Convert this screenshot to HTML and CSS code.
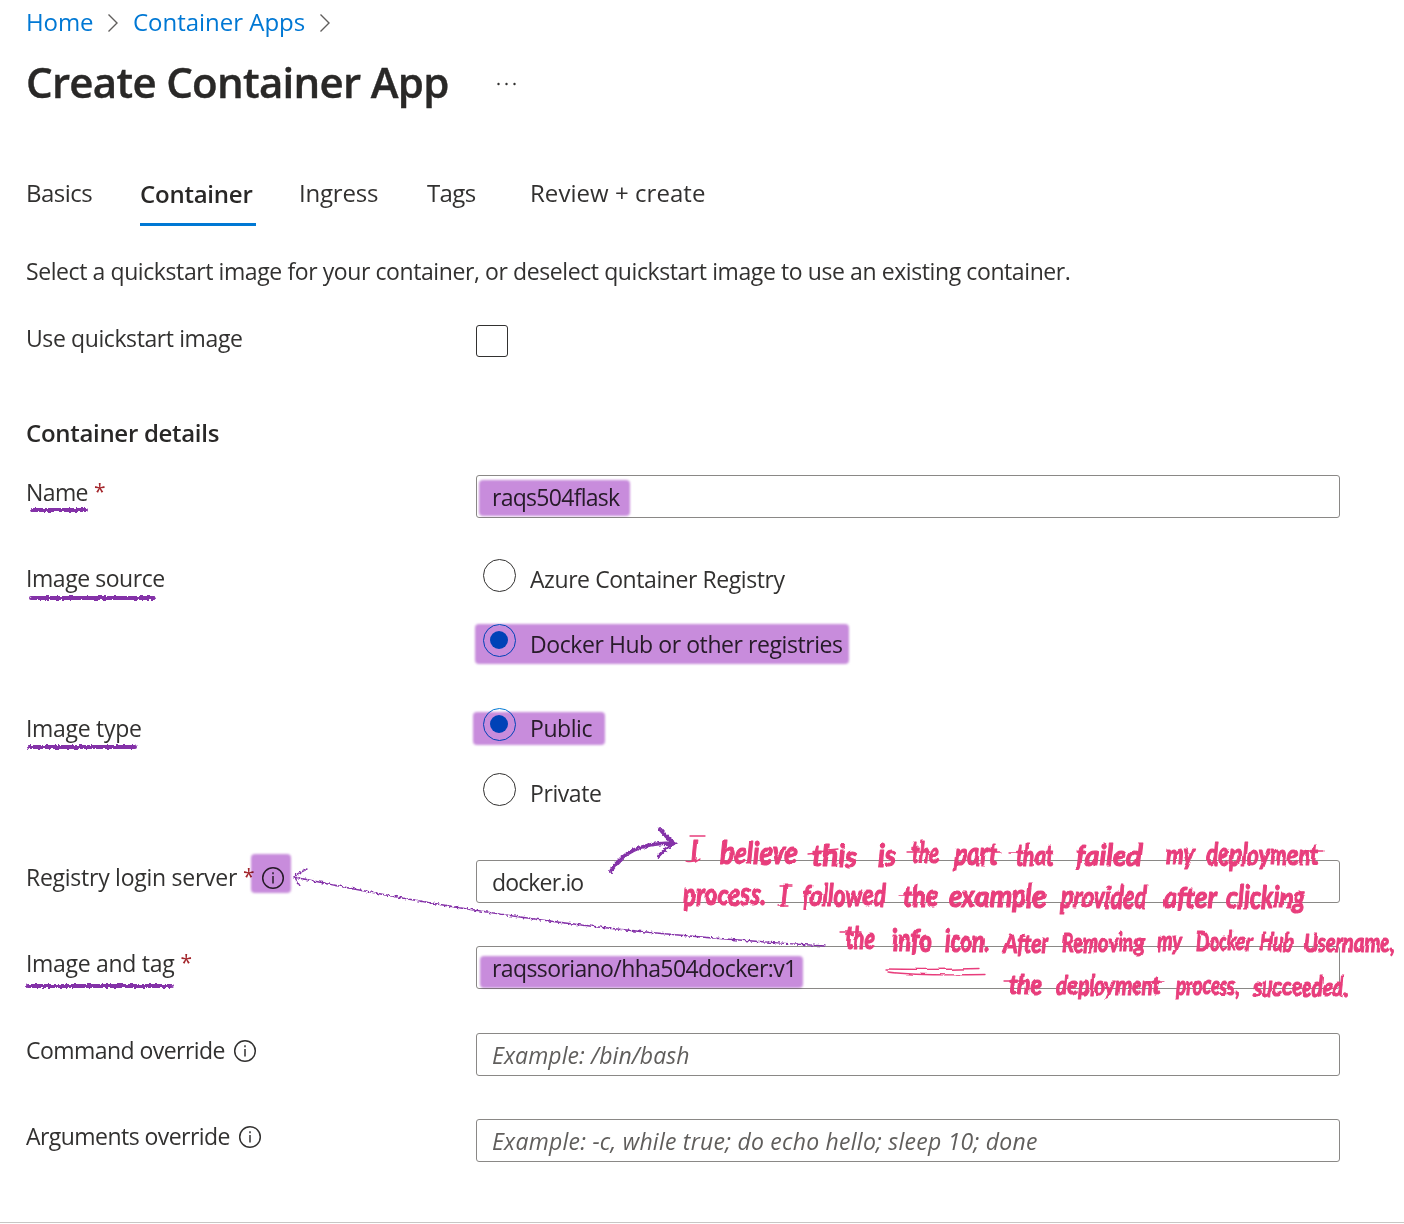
FILE: index.html
```
<!DOCTYPE html>
<html lang="en">
<head>
<meta charset="utf-8">
<title>Create Container App</title>
<link rel="stylesheet" href="styles.css">
</head>
<body>
<main class="page">
  <nav class="crumbs">
    <a class="home">Home</a>
    <svg class="chev" viewBox="0 0 12 20"><path d="M1.500 1.500 10 10l-8.500 8.500"/></svg>
    <a class="apps">Container Apps</a>
    <svg class="chev" viewBox="0 0 12 20"><path d="M1.500 1.500 10 10l-8.500 8.500"/></svg>
  </nav>
  <header class="title">
    <h1>Create Container App</h1>
    <svg class="more" viewBox="0 0 22 4"><circle cx="2.500" cy="2" r="1.200"/><circle cx="10.500" cy="2" r="1.200"/><circle cx="18.500" cy="2" r="1.200"/></svg>
  </header>
  <div class="tabs">
    <a class="tab basics">Basics</a>
    <a class="tab active">Container</a>
    <a class="tab ingress">Ingress</a>
    <a class="tab tags">Tags</a>
    <a class="tab review">Review + create</a>
  </div>
  <p class="desc">Select a quickstart image for your container, or deselect quickstart image to use an existing container.</p>
  <div class="row quick"><label>Use quickstart image</label><span class="check"></span></div>
  <h2>Container details</h2>
  <div class="row name"><label class="tight">Name<b>*</b></label><div class="field t5">raqs504flask</div></div>
  <div class="row source">
    <label>Image source</label>
    <div class="radios">
      <div class="radio"><i></i><span>Azure Container Registry</span></div>
      <div class="radio on"><i></i><span>Docker Hub or other registries</span></div>
    </div>
  </div>
  <div class="row type">
    <label>Image type</label>
    <div class="radios">
      <div class="radio on"><i></i><span>Public</span></div>
      <div class="radio"><i></i><span>Private</span></div>
    </div>
  </div>
  <div class="row server"><label class="login">Registry login server<b>*</b><svg class="info" viewBox="0 0 24 24"><circle cx="12" cy="12" r="10.300"/><path d="M12 10v7.500M12 6.300v2"/></svg></label><div class="field t7">docker.io</div></div>
  <div class="row image"><label class="imgtag">Image and tag<b>*</b></label><div class="field t5 up">raqssoriano/hha504docker:v1</div></div>
  <div class="row command"><label class="cmd">Command override<svg class="info" viewBox="0 0 24 24"><circle cx="12" cy="12" r="10.300"/><path d="M12 10v7.500M12 6.300v2"/></svg></label><div class="field hint">Example: /bin/bash</div></div>
  <div class="row args"><label class="cmd">Arguments override<svg class="info" viewBox="0 0 24 24"><circle cx="12" cy="12" r="10.300"/><path d="M12 10v7.500M12 6.300v2"/></svg></label><div class="field hint long">Example: -c, while true; do echo hello; sleep 10; done</div></div>
  <footer></footer>

  <svg class="marker" viewBox="0 0 1404 1224">
    <defs><filter id="soft" x="-5%" y="-10%" width="110%" height="120%"><feGaussianBlur stdDeviation="0.8"/></filter></defs>
    <g class="wide">
      <rect x="479" y="480" width="151" height="36" rx="4"/>
      <rect x="475" y="624" width="374" height="40" rx="4"/>
      <rect x="473" y="712" width="132" height="33" rx="4"/>
      <rect x="251" y="854" width="40" height="39" rx="4"/>
      <rect x="480" y="956" width="323" height="32" rx="4"/>
    </g>
  </svg>
  <svg class="ink" viewBox="0 0 1404 1224">
    <defs>
      <filter id="rough" filterUnits="userSpaceOnUse" x="0" y="480" width="1404" height="560"><feTurbulence type="fractalNoise" baseFrequency=".35" numOctaves="2" seed="4"/><feDisplacementMap in="SourceGraphic" scale="4" xChannelSelector="R" yChannelSelector="G"/></filter>
      <filter id="wobble" filterUnits="userSpaceOnUse" x="660" y="820" width="744" height="200"><feTurbulence type="fractalNoise" baseFrequency=".05" numOctaves="1" seed="9"/><feDisplacementMap in="SourceGraphic" scale="5" xChannelSelector="R" yChannelSelector="G"/></filter>
    </defs>
    <g class="purple">
      <path class="line" d="M32 510H86M31 598H154M29 747H135M28 986H172"/>
      <path class="swoop" d="M611 871C622 853 639 843 673 843M660 829Q667 838 674 843Q665 849 659 856"/>
      <path class="thin" d="M825 946C650 935 510 922 294 877M307 869Q299 873 294 876L300 886"/>
    </g>
    <g class="pink">
      <text x="692" y="864">I</text><text x="720" y="866" textLength="77" lengthAdjust="spacingAndGlyphs">believe</text><text x="812" y="869" textLength="45" lengthAdjust="spacingAndGlyphs">this</text><text x="878" y="869" textLength="18" lengthAdjust="spacingAndGlyphs">is</text><text x="911" y="865" textLength="29" lengthAdjust="spacingAndGlyphs">the</text><text x="954" y="867" textLength="44" lengthAdjust="spacingAndGlyphs">part</text><text x="1016" y="868" textLength="38" lengthAdjust="spacingAndGlyphs">that</text><text x="1076" y="868" textLength="66" lengthAdjust="spacingAndGlyphs">failed</text><text x="1165" y="867" textLength="30" lengthAdjust="spacingAndGlyphs">my</text><text x="1206" y="867" textLength="113" lengthAdjust="spacingAndGlyphs">deployment</text>
      <text x="683" y="907" textLength="83" lengthAdjust="spacingAndGlyphs">process.</text><text x="781" y="908">I</text><text x="803" y="908" textLength="83" lengthAdjust="spacingAndGlyphs">followed</text><text x="903" y="909" textLength="35" lengthAdjust="spacingAndGlyphs">the</text><text x="949" y="909" textLength="97" lengthAdjust="spacingAndGlyphs">example</text><text x="1061" y="910" textLength="86" lengthAdjust="spacingAndGlyphs">provided</text><text x="1163" y="910" textLength="54" lengthAdjust="spacingAndGlyphs">after</text><text x="1227" y="910" textLength="78" lengthAdjust="spacingAndGlyphs">clicking</text>
      <text x="845" y="951" textLength="30" lengthAdjust="spacingAndGlyphs">the</text><text x="892" y="953" textLength="40" lengthAdjust="spacingAndGlyphs">info</text><text x="944" y="954" textLength="46" lengthAdjust="spacingAndGlyphs">icon.</text>
      <g class="small">
        <text x="1004" y="954" textLength="45" lengthAdjust="spacingAndGlyphs">After</text><text x="1061" y="953" textLength="83" lengthAdjust="spacingAndGlyphs">Removing</text><text x="1157" y="952" textLength="25" lengthAdjust="spacingAndGlyphs">my</text><text x="1196" y="952" textLength="56" lengthAdjust="spacingAndGlyphs">Docker</text><text x="1260" y="952" textLength="34" lengthAdjust="spacingAndGlyphs">Hub</text><text x="1304" y="953" textLength="91" lengthAdjust="spacingAndGlyphs">Username,</text>
        <text x="1009" y="995" textLength="33" lengthAdjust="spacingAndGlyphs">the</text><text x="1057" y="996" textLength="103" lengthAdjust="spacingAndGlyphs">deployment</text><text x="1176" y="996" textLength="64" lengthAdjust="spacingAndGlyphs">process,</text><text x="1253" y="997" textLength="96" lengthAdjust="spacingAndGlyphs">succeeded.</text>
      </g>
      <path d="M886 969Q930 970 979 968.500M888 972Q920 976 986 974.500"/>
      <path d="M690 836H705M687 862Q694 864 700 859M780 885H791M778 906H788M808 853L838 850M907 851H930M984 852H1002M1010 852H1030M1302 850H1324M898 895H922M840 932H861M1004 981H1025M1146 982H1163"/>
    </g>
  </svg>
</main>
</body>
</html>
```
FILE: styles.css
```
* { box-sizing: border-box; }
body { margin: 0; background: #fff; color: #323130; font: 23px/36px "Open Sans", "Noto Sans", sans-serif; }
.page { position: relative; width: 1404px; height: 1224px; padding-left: 26px; overflow: hidden; }
h1, h2, p { margin: 0; }

.crumbs { display: flex; align-items: center; height: 44px; font-size: 24px; color: #0078d4; }
.home { width: 81px; letter-spacing: -.1px; }
.apps { width: 187px; letter-spacing: -.02px; }
.chev { width: 12px; height: 20px; margin-right: 14px; fill: none; stroke: #605e5c; stroke-width: 1.4; position: relative; top: 1px; }
.apps + .chev { margin-left: -1px; }

.title { display: flex; align-items: center; height: 78px; color: #292827; }
h1 { width: 470px; font-size: 42px; font-weight: 600; letter-spacing: -.7px; line-height: 76px; height: 78px; white-space: nowrap; -webkit-text-stroke: .4px #292827; }
.more { width: 22px; height: 4px; margin-top: 2px; fill: #323130; }

.tabs { display: flex; height: 60px; margin-top: 44px; font-size: 24px; line-height: 54px; white-space: nowrap; }
.tab { height: 60px; }
.basics { width: 114px; letter-spacing: -.5px; }
.active { width: 116px; margin-right: 43px; border-bottom: 3px solid #0078d4; font-weight: 600; letter-spacing: -.23px; line-height: 56px; color: #292827; }
.ingress { width: 128px; letter-spacing: -.2px; }
.tags { width: 103px; letter-spacing: -.6px; }
.review { letter-spacing: .05px; }

.desc { height: 90px; line-height: 90px; letter-spacing: -.41px; white-space: nowrap; }
.row { display: grid; grid-template-columns: 450px 864px; height: 43px; margin-bottom: 43px; }
label { display: flex; line-height: 34px; letter-spacing: -.4px; white-space: nowrap; }
label b { margin-left: 6px; font-size: 21px; font-weight: 400; line-height: 32px; color: #a4262c; }
.login { letter-spacing: -.26px; }
.tight { letter-spacing: -.6px; }
.imgtag { letter-spacing: -.3px; }
.cmd { letter-spacing: -.55px; }
.info { width: 24px; height: 24px; margin: 6px 0 0 8px; fill: none; stroke: #323130; stroke-width: 1.5; }
.quick { height: 84px; margin: 0; padding-top: 4px; }
.quick label { line-height: 36px; }
.check { width: 32px; height: 32px; margin-top: 5px; border: 1.500px solid #323130; border-radius: 3px; }
h2 { height: 75px; font-size: 24px; font-weight: 600; line-height: 66px; letter-spacing: -.3px; color: #292827; }
.field { height: 43px; padding-left: 15px; border: 1px solid #8a8886; border-radius: 3px; line-height: 43px; letter-spacing: -.5px; white-space: nowrap; }
.t5 { letter-spacing: -.72px; }
.t7 { letter-spacing: -.85px; }
.up { line-height: 42px; letter-spacing: -.6px; }
.hint { font-style: italic; color: #605e5c; letter-spacing: .08px; }
.long { letter-spacing: .24px; }
.name { margin-bottom: 25px; }
.source { height: 149px; margin: 0; }
.source label { padding-top: 18px; letter-spacing: -.45px; }
.type { height: 168px; margin: 0; }
.type label { padding-top: 19px; letter-spacing: -.3px; }
.image { margin-bottom: 44px; }
.login .info { margin-left: 7px; }
.radio { display: flex; align-items: center; height: 65px; padding-left: 7px; letter-spacing: -.43px; }
.radio i { display: grid; place-items: center; width: 33px; height: 33px; margin-right: 14px; border: 1.500px solid #323130; border-radius: 50%; }
.radio span { padding-top: 7px; }
.radio.on i { border-color: #0078d4; }
.radio.on i::after { content: ""; width: 18px; height: 18px; margin: -1px 0 0 -1px; border-radius: 50%; background: #0078d4; }
footer { border-top: 1px solid #c8c6c4; margin: 60px 0 0 -26px; }

/* Hand-drawn annotations over the form */
.marker, .ink { position: absolute; left: 0; top: 0; width: 1404px; height: 1224px; }
.marker { mix-blend-mode: multiply; fill: #c88cdc; }
.wide { filter: url(#soft); }
.purple { fill: none; stroke: #8430a8; stroke-linecap: round; filter: url(#rough); }
.line { stroke-width: 4; }
.swoop { stroke-width: 3.700; }
.thin { stroke-width: 1.400; }
.pink { fill: #e83e7c; stroke: #e83e7c; stroke-linecap: round; stroke-linejoin: round; font: italic 700 23px Lato, sans-serif; filter: url(#wobble); }
.pink text { stroke-width: .9px; transform-box: fill-box; transform-origin: 50% 100%; transform: scaleY(1.3); }
.small { font-size: 21px; }
.pink path { fill: none; stroke-width: 1.300; }
```
